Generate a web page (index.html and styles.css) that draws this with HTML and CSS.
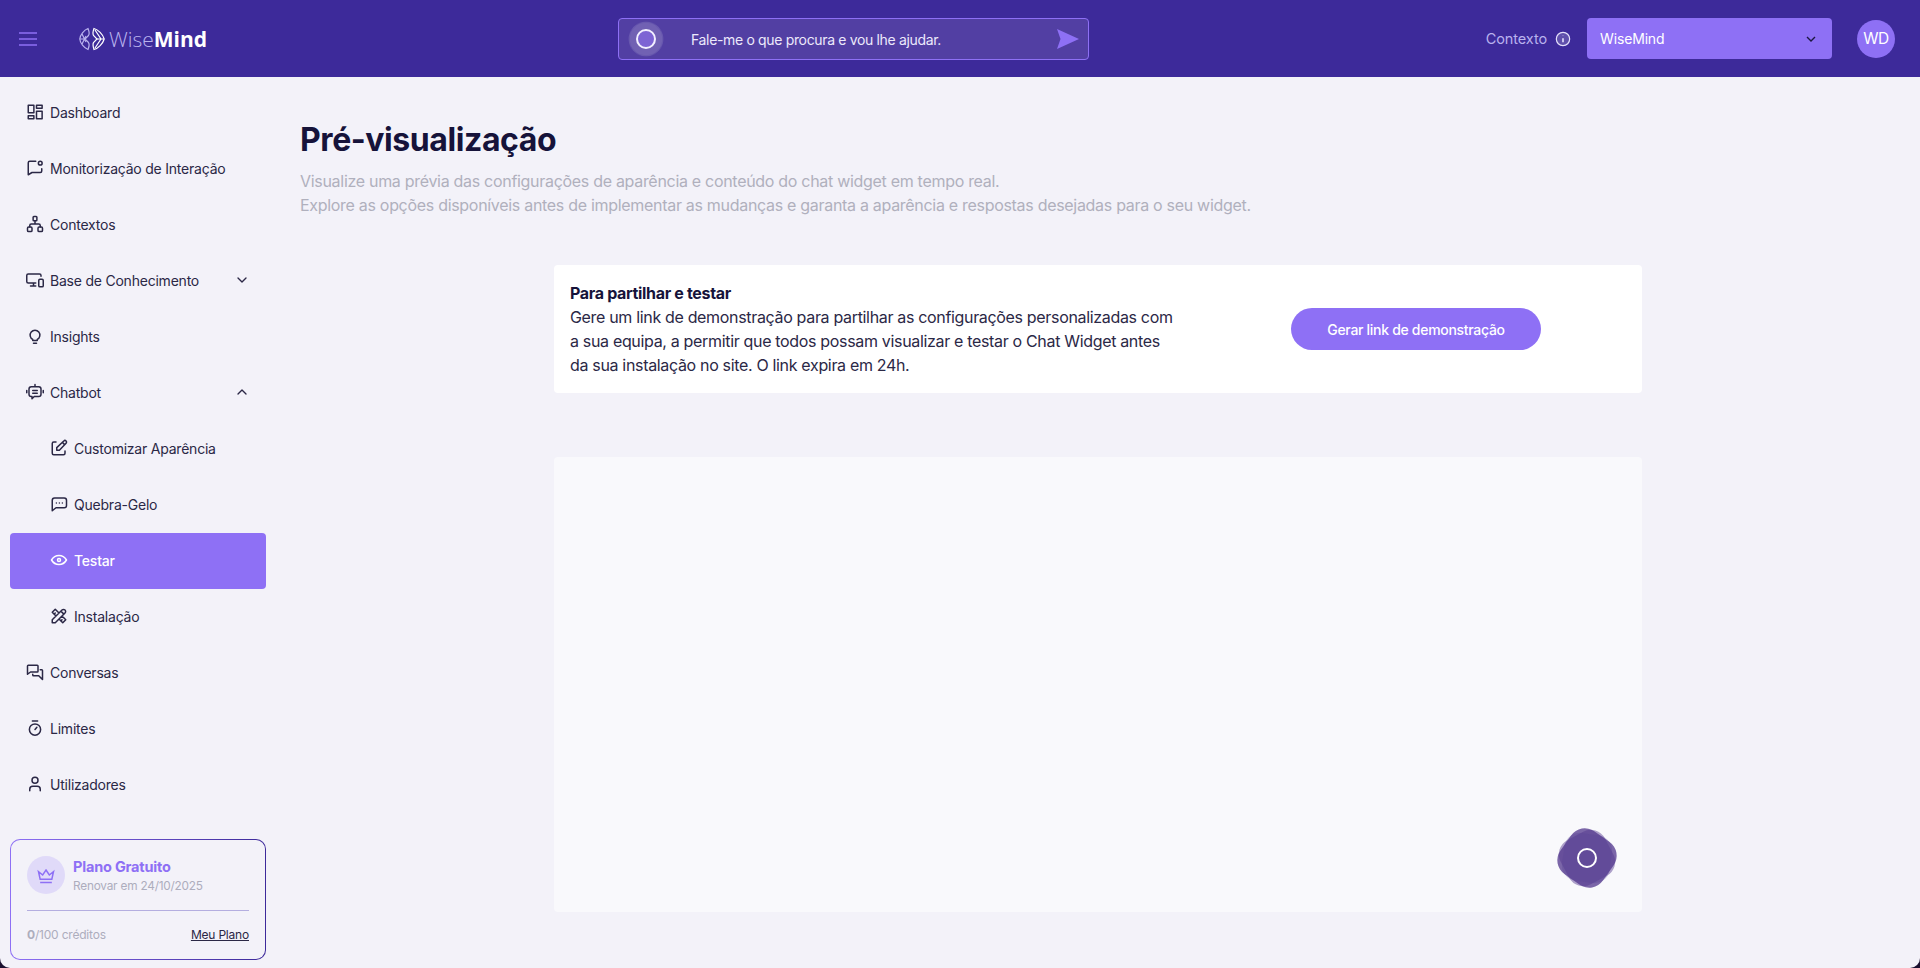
FILE: index.html
```html
<!DOCTYPE html>
<html lang="pt">
<head>
    <meta charset="UTF-8">
    <meta name="viewport" content="width=device-width, initial-scale=1.0">
    <title>WiseMind - Pré-visualização</title>
    <link rel="stylesheet" href="styles.css">
</head>
<body>
    <header class="topbar">
        <div class="topbar-left">
            <svg class="burger" viewBox="0 0 18 14" fill="none" stroke="currentColor" stroke-width="1.6"><path d="M0 1h18M0 7h18M0 13h18"/></svg>
            <div class="logo">
                <svg class="logo-mark" viewBox="0 0 26 24" fill="none" stroke-width="1.2">
                    <g stroke="#b9b2ee"><path d="M9 1.500C5 3 1 8 .8 12c.2 4 4.200 9 8.200 10.500 1-3 2-5 .5-7L6 12l3.500-3.500C11 6.500 10 4 9 1.500z"/><path d="M.8 12H6M3 7l4 8M3 17l4-8"/></g>
                    <g stroke="#fff"><path d="M15 1.500c4 1 9 6 10.200 10.500-1.200 4.500-6.200 9.500-10.200 10.500-1-3-1.500-5-.5-7L18 12l-3.500-3.500C13.500 6.500 14 4 15 1.500z"/><path d="M16 3l6 9-6 9M18 12h7"/></g>
                </svg>
                <span class="logo-text"><span class="logo-light">Wise</span><b>Mind</b></span>
            </div>
        </div>
        <div class="ask-bar">
            <div class="blob blob-small">
                <i></i><i></i><i></i>
                <span class="blob-ring"></span>
            </div>
            <span class="ask-text">Fale-me o que procura e vou lhe ajudar.</span>
            <svg class="ask-send" viewBox="0 0 22 20"><path d="M0 0l22 10L0 20l3.500-10z" fill="#8e70f5"/></svg>
        </div>
        <div class="topbar-right">
            <span class="context-label">Contexto</span>
            <svg class="info-icon" viewBox="0 0 24 24" fill="rgba(255,255,255,0.18)" stroke="currentColor" stroke-width="1.800"><circle cx="12" cy="12" r="10"/><path d="M12 11v6M12 7v.5" stroke-width="2.400"/></svg>
            <div class="context-select">
                <span>WiseMind</span>
                <svg viewBox="0 0 24 24" fill="none" stroke="#1b1740" stroke-width="2"><path d="M6 9l6 6 6-6"/></svg>
            </div>
            <div class="avatar">WD</div>
        </div>
    </header>

    <div class="layout">
        <aside class="sidebar">
            <nav class="nav">
                <a class="nav-item">
                    <svg viewBox="0 0 24 24"><path d="M3 3h7.500v10H3zM3 17h7.500v4H3zM14 11h7.500v10H14zM14 3h7.500v4H14z"/></svg>
                    <span>Dashboard</span>
                </a>
                <a class="nav-item">
                    <svg viewBox="0 0 24 24"><path d="M13 3H5a2 2 0 0 0-2 2v16l5-3h11a2 2 0 0 0 2-2v-3"/><circle cx="19" cy="5.500" r="2.500"/></svg>
                    <span>Monitorização de Interação</span>
                </a>
                <a class="nav-item">
                    <svg viewBox="0 0 24 24"><rect x="9.500" y="2" width="5" height="5.500" rx="1"/><rect x="2" y="16" width="6" height="6" rx="1.500"/><rect x="16" y="16" width="6" height="6" rx="1.500"/><path d="M12 7.500V12M5 16v-2a2 2 0 0 1 2-2h10a2 2 0 0 1 2 2v2"/></svg>
                    <span>Contextos</span>
                </a>
                <a class="nav-item">
                    <svg viewBox="0 0 24 24"><path d="M20 7V6a2 2 0 0 0-2-2H3a2 2 0 0 0-2 2v8a2 2 0 0 0 2 2h10M6 20h7M10 16v4"/><rect x="17" y="11" width="6" height="10" rx="1.500"/></svg>
                    <span>Base de Conhecimento</span>
                    <svg class="nav-caret" viewBox="0 0 24 24"><path d="M6 9l6 6 6-6"/></svg>
                </a>
                <a class="nav-item">
                    <svg viewBox="0 0 24 24"><path d="M9 16.500a6.500 6.500 0 1 1 6 0M9 16.500v1.500h6v-1.500M10 21.500h4"/></svg>
                    <span>Insights</span>
                </a>
                <a class="nav-item">
                    <svg viewBox="0 0 24 24"><path d="M12 2v3M7 5h10a3 3 0 0 1 3 3v7a3 3 0 0 1-3 3h-6l-3 3v-3H7a3 3 0 0 1-3-3V8a3 3 0 0 1 3-3zM1 10v3M23 10v3M9 10h6M9 13.500h6"/></svg>
                    <span>Chatbot</span>
                    <svg class="nav-caret" viewBox="0 0 24 24"><path d="M6 15l6-6 6 6"/></svg>
                </a>
                <a class="nav-item nav-sub">
                    <svg viewBox="0 0 24 24"><path d="M8 4H5a2 2 0 0 0-2 2v13a2 2 0 0 0 2 2h13a2 2 0 0 0 2-2v-3M21.400 5.600a2.100 2.100 0 0 0-3-3L9 11.500v3.500h3.500zM16.500 4.500l3 3"/></svg>
                    <span>Customizar Aparência</span>
                </a>
                <a class="nav-item nav-sub">
                    <svg viewBox="0 0 24 24"><path d="M3 21V7a3 3 0 0 1 3-3h13a3 3 0 0 1 3 3v7a3 3 0 0 1-3 3H8zM8.500 10.500v.01M12.500 10.500v.01M16.500 10.500v.01"/></svg>
                    <span>Quebra-Gelo</span>
                </a>
                <a class="nav-item nav-sub active">
                    <svg viewBox="0 0 24 24"><path d="M10 12a2 2 0 1 0 4 0 2 2 0 0 0-4 0zM22 12c-2.400 4-5.800 6-10 6s-7.600-2-10-6c2.400-4 5.800-6 10-6s7.600 2 10 6z"/></svg>
                    <span>Testar</span>
                </a>
                <a class="nav-item nav-sub">
                    <svg viewBox="0 0 24 24"><path d="M3 21h4L20 8a2.800 2.800 0 0 0-4-4L3 17zM14.500 5.500l4 4M12 8L7 3 3 7l5 5M7 8L5.500 9.500M16 12l5 5-4 4-5-5M16 17l-1.500 1.500"/></svg>
                    <span>Instalação</span>
                </a>
                <a class="nav-item">
                    <svg viewBox="0 0 24 24"><path d="M2 15V4a1 1 0 0 1 1-1h12a1 1 0 0 1 1 1v7a1 1 0 0 1-1 1H6zM19 9h2a1 1 0 0 1 1 1v12l-5-5H10a1 1 0 0 1-1-1v-1"/></svg>
                    <span>Conversas</span>
                </a>
                <a class="nav-item">
                    <svg viewBox="0 0 24 24"><circle cx="12" cy="14" r="7.500"/><path d="M8.500 2.500h7M12 14l2.500-3"/></svg>
                    <span>Limites</span>
                </a>
                <a class="nav-item">
                    <svg viewBox="0 0 24 24"><circle cx="12" cy="7" r="4"/><path d="M5 21v-2a4 4 0 0 1 4-4h6a4 4 0 0 1 4 4v2"/></svg>
                    <span>Utilizadores</span>
                </a>
            </nav>

            <div class="plan-card">
                <div class="plan-head">
                    <div class="plan-badge">
                        <svg viewBox="0 0 24 24" fill="none" stroke="#8e70f5" stroke-width="1.800"><path d="M12 6l4 6 5-4-2 9H5L3 8l5 4zM5 21h14"/></svg>
                    </div>
                    <div>
                        <div class="plan-name">Plano Gratuito</div>
                        <div class="plan-date">Renovar em 24/10/2025</div>
                    </div>
                </div>
                <div class="plan-foot">
                    <span class="plan-credits"><b>0</b>/100 créditos</span>
                    <a class="plan-link">Meu Plano</a>
                </div>
            </div>
        </aside>

        <main class="content">
            <h1>Pré-visualização</h1>
            <p class="lead">Visualize uma prévia das configurações de aparência e conteúdo do chat widget em tempo real.<br>Explore as opções disponíveis antes de implementar as mudanças e garanta a aparência e respostas desejadas para o seu widget.</p>

            <section class="share-card">
                <div class="share-text">
                    <strong>Para partilhar e testar</strong><br>
                    Gere um link de demonstração para partilhar as configurações personalizadas com a sua equipa, a permitir que todos possam visualizar e testar o Chat Widget antes da sua instalação no site. O link expira em 24h.
                </div>
                <button class="demo-btn">Gerar link de demonstração</button>
            </section>

            <section class="preview-box">
                <div class="blob blob-large">
                    <i></i><i></i><i></i>
                    <span class="blob-ring"></span>
                </div>
            </section>
        </main>
    </div>
</body>
</html>
```

FILE: styles.css
```css
* {
    box-sizing: border-box;
}
html {
    background-color: #1a1030;
}
body {
    margin: 0;
    height: 968px;
    overflow: hidden;
    display: flex;
    flex-direction: column;
    font-family: Inter, "Noto Sans", sans-serif;
    background-color: #f3f2f9;
    border-radius: 0 0 10px 10px;
    color: #16133a;
}

/* top bar */
.topbar {
    height: 77px;
    flex: none;
    display: flex;
    align-items: center;
    background-color: #3d2a9a;
    position: relative;
}
.topbar-left {
    width: 618px;
    display: flex;
    align-items: center;
    padding-left: 19px;
}
.burger {
    width: 18px;
    height: 14px;
    color: #8e70f5;
}
.logo {
    margin-left: 42px;
    display: flex;
    align-items: center;
    gap: 4px;
}
.logo-mark {
    width: 26px;
    height: 24px;
}
.logo-text {
    font-family: "Open Sans", sans-serif;
    font-size: 21px;
    color: #fff;
}
.logo-light {
    color: #b9b2ee;
    font-weight: 300;
}
.logo-text b {
    font-weight: 700;
}
.ask-bar {
    width: 471px;
    height: 42px;
    margin-top: 1px;
    display: flex;
    align-items: center;
    padding: 0 9px 0 8px;
    border: 1px solid #8e70f5;
    border-radius: 4px;
    background-color: #523fa3;
}
.ask-text {
    margin-left: 26px;
    flex: 1;
    font-size: 14px;
    letter-spacing: -0.34px;
    color: #ece9fb;
}
.ask-send {
    width: 22px;
    height: 20px;
}
.topbar-right {
    margin-left: auto;
    display: flex;
    align-items: center;
    padding-right: 25px;
}
.context-label {
    font-size: 14.5px;
    letter-spacing: -0.1px;
    color: #b9b2ee;
}
.info-icon {
    width: 16px;
    height: 16px;
    margin-left: 8px;
    color: #e4e0fa;
}
.context-select {
    width: 245px;
    height: 41px;
    margin-left: 16px;
    display: flex;
    align-items: center;
    justify-content: space-between;
    padding: 0 13px;
    background-color: #8e70f5;
    border-radius: 4px;
    font-size: 14px;
    letter-spacing: -0.15px;
    color: #fff;
}
.context-select svg {
    width: 16px;
    height: 16px;
}
.avatar {
    width: 38px;
    height: 38px;
    margin-left: 25px;
    display: flex;
    align-items: center;
    justify-content: center;
    border-radius: 50%;
    background-color: #8e70f5;
    font-size: 15.5px;
    letter-spacing: -0.4px;
    color: #fff;
}

/* blob behind the assistant ring */
.blob {
    display: flex;
    align-items: center;
    justify-content: center;
    position: relative;
    flex: none;
}
.blob i {
    position: absolute;
}
.blob-ring {
    border-radius: 50%;
    position: relative;
}
.blob-small {
    width: 38px;
    height: 38px;
}
.blob-small i {
    inset: 3px;
    border-radius: 38%;
    background-color: rgba(130, 115, 190, 0.3);
}
.blob-small i:nth-child(1) {
    transform: rotate(45deg);
}
.blob-small i:nth-child(2) {
    transform: rotate(15deg);
}
.blob-small i:nth-child(3) {
    transform: rotate(-15deg);
}
.blob-small .blob-ring {
    width: 20px;
    height: 20px;
    border: 2.5px solid #f3f0ff;
    background-color: #7d64d4;
}
.blob-large {
    position: absolute;
    right: 23px;
    bottom: 22px;
    width: 64px;
    height: 64px;
}
.blob-large i {
    border-radius: 32%;
}
.blob-large i:nth-child(1) {
    inset: 6px;
    transform: rotate(35deg);
    background-color: rgba(80, 52, 140, 0.75);
}
.blob-large i:nth-child(2) {
    inset: 7px;
    transform: rotate(62deg);
    background-color: rgba(80, 52, 140, 0.45);
}
.blob-large i:nth-child(3) {
    inset: 8px;
    transform: rotate(8deg);
    background-color: rgba(90, 70, 150, 0.35);
}
.blob-large .blob-ring {
    width: 20px;
    height: 20px;
    border: 2px solid #fff;
}

/* sidebar */
.layout {
    flex: 1;
    display: flex;
    min-height: 0;
}
.sidebar {
    width: 276px;
    flex: none;
    display: flex;
    flex-direction: column;
    padding: 8px 10px;
}
.nav {
    flex: 1;
}
.nav-item {
    height: 56px;
    display: flex;
    align-items: center;
    gap: 6px;
    padding: 0 16px 2px;
    border-radius: 4px;
    font-size: 14px;
    letter-spacing: -0.22px;
    color: #2b2846;
}
.nav-item svg {
    width: 18px;
    height: 18px;
    flex: none;
    fill: none;
    stroke: currentColor;
    stroke-width: 2;
    stroke-linecap: round;
    stroke-linejoin: round;
}
.nav-item .nav-caret {
    width: 16px;
    height: 16px;
    margin-left: auto;
}
.nav-sub {
    padding-left: 40px;
}
.nav-item.active {
    background-color: #8e70f5;
    color: #fff;
    font-weight: 500;
}
.plan-card {
    height: 121px;
    padding: 16px 16px 0;
    border: 1.5px solid transparent;
    border-radius: 10px;
    background: linear-gradient(#f3f2f9, #f3f2f9) padding-box,
        linear-gradient(90deg, #8e70f5, #3d2a9a) border-box;
}
.plan-head {
    display: flex;
    align-items: center;
    gap: 8px;
    height: 38px;
}
.plan-badge {
    width: 38px;
    height: 38px;
    flex: none;
    display: flex;
    align-items: center;
    justify-content: center;
    border-radius: 50%;
    background-color: #e0daf9;
}
.plan-badge svg {
    width: 20px;
    height: 20px;
}
.plan-name {
    font-size: 14.5px;
    font-weight: 700;
    letter-spacing: -0.2px;
    color: #8e70f5;
}
.plan-date {
    margin-top: 4px;
    font-size: 11.8px;
    letter-spacing: -0.2px;
    color: #adadbd;
}
.plan-foot {
    margin-top: 16px;
    padding-top: 16px;
    display: flex;
    justify-content: space-between;
    border-top: 1px solid #b4aee0;
    font-size: 12px;
    letter-spacing: -0.2px;
}
.plan-credits {
    color: #adadbd;
}
.plan-link {
    color: #2b2846;
    text-decoration: underline;
}

/* main area */
.content {
    flex: 1;
    padding: 41px 0 0 24px;
}
h1 {
    margin: 0;
    font-size: 32px;
    line-height: 44px;
    font-weight: 700;
    letter-spacing: -0.42px;
    color: #16133a;
}
.lead {
    margin: 7px 0 0;
    font-size: 16px;
    line-height: 24px;
    letter-spacing: -0.3px;
    color: #b0b0bd;
}
.share-card {
    width: 1088px;
    height: 128px;
    margin: 48px 0 0 254px;
    display: flex;
    align-items: center;
    padding: 0 16px;
    background-color: #fff;
    border-radius: 4px;
}
.share-text {
    width: 606px;
    font-size: 16px;
    line-height: 24px;
    letter-spacing: -0.33px;
    color: #2b2846;
}
.share-text strong {
    font-weight: 700;
    color: #16133a;
}
.demo-btn {
    width: 250px;
    height: 42px;
    margin-left: 115px;
    border: none;
    border-radius: 21px;
    background-color: #8e70f5;
    font-family: inherit;
    font-size: 14px;
    font-weight: 500;
    letter-spacing: -0.3px;
    color: #fff;
}
.preview-box {
    width: 1088px;
    height: 455px;
    margin: 64px 0 0 254px;
    position: relative;
    background-color: #f9f9fc;
    border-radius: 4px;
}
```
